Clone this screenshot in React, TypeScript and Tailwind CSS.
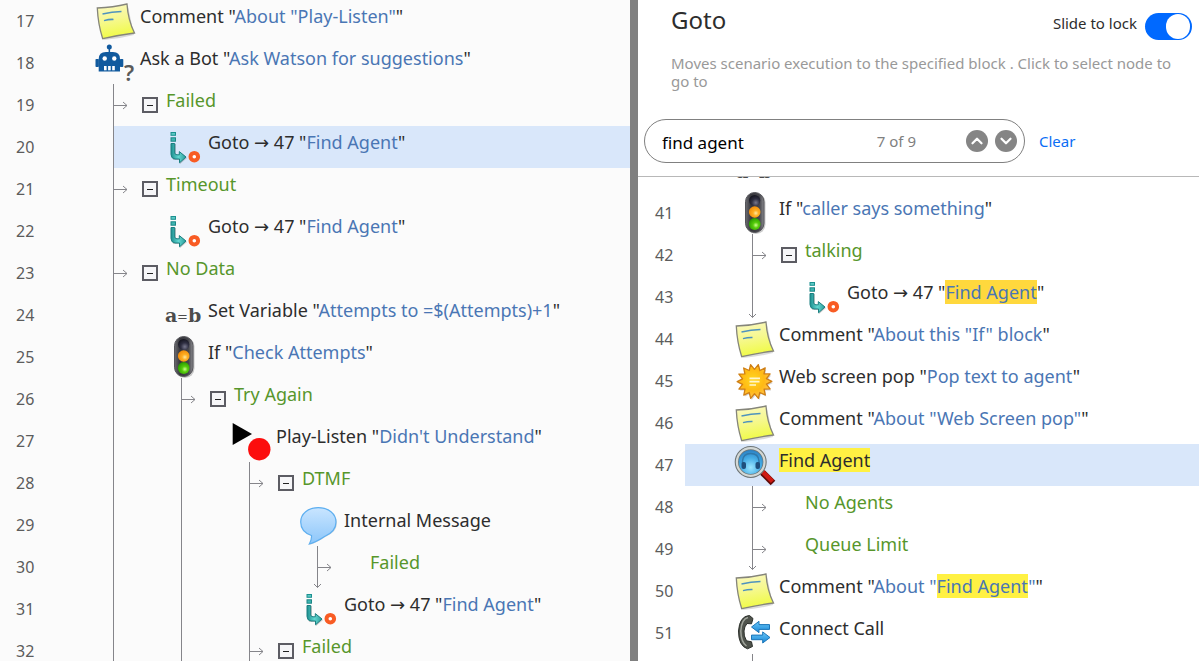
import { useState } from "react";
import type { ReactNode } from "react";
import { ChevronDown, ChevronUp } from "lucide-react";
import clsx from "clsx";

type IconName = "note" | "bot" | "goto" | "variable" | "if" | "play" | "message" | "pop" | "find" | "call";

type Row = {
  n: number;
  // vertical guide lines left of the row, "end" closes the line with an arrow head
  guides: ("line" | "end")[];
  icon?: IconName;
  branch?: boolean;
  collapsible?: boolean;
  selected?: boolean;
  label: ReactNode;
};

const Name = ({ children }: { children: ReactNode }) => (
  <>
    &quot;<span className="text-[#4a76b4]">{children}</span>&quot;
  </>
);

const GotoLabel = ({ children = "Find Agent" }: { children?: ReactNode }) => (
  <>
    Goto <span className="font-['DejaVu_Sans',sans-serif] leading-none">→</span> 47 <Name>{children}</Name>
  </>
);

const scenario: Row[] = [
  { n: 17, guides: [], icon: "note", label: <>Comment <Name>About "Play-Listen"</Name></> },
  { n: 18, guides: [], icon: "bot", label: <>Ask a Bot <Name>Ask Watson for suggestions</Name></> },
  { n: 19, guides: ["line"], branch: true, collapsible: true, label: "Failed" },
  { n: 20, guides: ["line"], icon: "goto", selected: true, label: <GotoLabel /> },
  { n: 21, guides: ["line"], branch: true, collapsible: true, label: "Timeout" },
  { n: 22, guides: ["line"], icon: "goto", label: <GotoLabel /> },
  { n: 23, guides: ["line"], branch: true, collapsible: true, label: "No Data" },
  { n: 24, guides: ["line"], icon: "variable", label: <>Set Variable <Name>Attempts to =$(Attempts)+1</Name></> },
  { n: 25, guides: ["line"], icon: "if", label: <>If <Name>Check Attempts</Name></> },
  { n: 26, guides: ["line", "line"], branch: true, collapsible: true, label: "Try Again" },
  { n: 27, guides: ["line", "line"], icon: "play", label: <>Play-Listen <Name>Didn't Understand</Name></> },
  { n: 28, guides: ["line", "line", "line"], branch: true, collapsible: true, label: "DTMF" },
  { n: 29, guides: ["line", "line", "line"], icon: "message", label: "Internal Message" },
  { n: 30, guides: ["line", "line", "line", "end"], branch: true, label: "Failed" },
  { n: 31, guides: ["line", "line", "line"], icon: "goto", label: <GotoLabel /> },
  { n: 32, guides: ["line", "line", "line"], branch: true, collapsible: true, label: "Failed" },
];

const results: Row[] = [
  { n: 40, guides: [], icon: "variable", label: "" },
  { n: 41, guides: [], icon: "if", label: <>If <Name>caller says something</Name></> },
  { n: 42, guides: ["line"], branch: true, collapsible: true, label: "talking" },
  {
    n: 43,
    guides: ["end"],
    icon: "goto",
    label: <GotoLabel><mark className="bg-[#ffd83d] text-inherit">Find Agent</mark></GotoLabel>,
  },
  { n: 44, guides: [], icon: "note", label: <>Comment <Name>About this "If" block</Name></> },
  { n: 45, guides: [], icon: "pop", label: <>Web screen pop <Name>Pop text to agent</Name></> },
  { n: 46, guides: [], icon: "note", label: <>Comment <Name>About "Web Screen pop"</Name></> },
  {
    n: 47,
    guides: [],
    icon: "find",
    selected: true,
    label: <mark className="bg-[#fff143] text-inherit">Find Agent</mark>,
  },
  { n: 48, guides: ["line"], branch: true, label: "No Agents" },
  { n: 49, guides: ["end"], branch: true, label: "Queue Limit" },
  {
    n: 50,
    guides: [],
    icon: "note",
    label: <>Comment <Name>About "<mark className="bg-[#fff143] text-inherit">Find Agent</mark>"</Name></>,
  },
  { n: 51, guides: [], icon: "call", label: "Connect Call" },
  { n: 52, guides: ["line"], branch: true, label: "" },
];

const SUN_POINTS = Array.from({ length: 28 }, (_, i) => {
  const r = i % 2 === 0 ? 17.3 : 12.2;
  const a = (i / 28) * Math.PI * 2 - 1.35;
  return `${(20.5 + r * Math.cos(a)).toFixed(1)},${(21.5 + r * Math.sin(a)).toFixed(1)}`;
}).join(" ");

function IconDefs() {
  return (
    <svg width="0" height="0" className="absolute" aria-hidden="true">
      <defs>
        <linearGradient id="paper" x1="0" y1="0" x2="0.2" y2="1">
          <stop offset="0" stopColor="#fbf9c4" />
          <stop offset="0.5" stopColor="#f6f891" />
          <stop offset="1" stopColor="#f0fb48" />
        </linearGradient>
        <linearGradient id="teal" x1="0" y1="0" x2="1" y2="0">
          <stop offset="0" stopColor="#1c8f8f" />
          <stop offset="0.5" stopColor="#62d6d0" />
          <stop offset="1" stopColor="#2a9c9a" />
        </linearGradient>
        <linearGradient id="housing" x1="0" y1="0" x2="1" y2="0">
          <stop offset="0" stopColor="#6d6d72" />
          <stop offset="0.3" stopColor="#36363c" />
          <stop offset="0.75" stopColor="#45454b" />
          <stop offset="1" stopColor="#8b8b8f" />
        </linearGradient>
        <radialGradient id="lampOff" cx="0.6" cy="0.7" r="0.7">
          <stop offset="0" stopColor="#77778c" />
          <stop offset="0.5" stopColor="#2f2f42" />
          <stop offset="1" stopColor="#15151f" />
        </radialGradient>
        <radialGradient id="lampAmber" cx="0.6" cy="0.6" r="0.6">
          <stop offset="0" stopColor="#ffe9a0" />
          <stop offset="0.4" stopColor="#ffae22" />
          <stop offset="1" stopColor="#f08c0a" />
        </radialGradient>
        <radialGradient id="lampGreen" cx="0.6" cy="0.6" r="0.6">
          <stop offset="0" stopColor="#d0ff90" />
          <stop offset="0.4" stopColor="#56cc0c" />
          <stop offset="1" stopColor="#2c9d00" />
        </radialGradient>
        <linearGradient id="bubble" x1="0" y1="0" x2="0" y2="1">
          <stop offset="0" stopColor="#c9e5ff" />
          <stop offset="1" stopColor="#8cc6fa" />
        </linearGradient>
        <radialGradient id="sun" cx="0.45" cy="0.45" r="0.55">
          <stop offset="0" stopColor="#ffd820" />
          <stop offset="0.6" stopColor="#ffb914" />
          <stop offset="1" stopColor="#ffc24a" />
        </radialGradient>
        <radialGradient id="lens" cx="0.5" cy="0.7" r="0.7">
          <stop offset="0" stopColor="#9ce6ff" />
          <stop offset="0.5" stopColor="#45ade6" />
          <stop offset="1" stopColor="#2474ba" />
        </radialGradient>
        <linearGradient id="arrowBlue" x1="0" y1="0" x2="0" y2="1">
          <stop offset="0" stopColor="#6cc8f8" />
          <stop offset="1" stopColor="#1786d6" />
        </linearGradient>
      </defs>
    </svg>
  );
}

const icons: Record<IconName, ReactNode> = {
  note: (
    <>
      <path d="M3 10 L8.5 40 Q24 39 39 35 L33 6 Z" fill="#000" opacity="0.14" />
      <path d="M2.3 8 Q18 7.500 32 4 Q33 20 39.500 33 Q24 35 7.700 38.700 Q3 24 2.300 8 Z" fill="url(#paper)" stroke="#85857a" strokeWidth="1.3" />
      <path d="M7.500 14 Q17 12 26.500 11.600" fill="none" stroke="#4f93bd" strokeWidth="1.500" />
      <path d="M9 20.600 Q14 19.200 18.500 19.400" fill="none" stroke="#4f93bd" strokeWidth="1.500" />
    </>
  ),
  bot: (
    <>
      <g fill="#115a9e">
        <circle cx="14.300" cy="5" r="2.500" />
        <rect x="13.600" y="6" width="1.500" height="5" />
        <path d="M3.700 29.500 V17 Q3.700 10 11 10 H18 Q25 10 25 17 V29.500 Z" />
        <rect x="0.500" y="17" width="3.400" height="8" rx="0.800" />
        <rect x="24.900" y="17" width="3.400" height="8" rx="0.800" />
      </g>
      <g fill="#fff">
        <circle cx="9.700" cy="16.500" r="2.200" />
        <circle cx="19.300" cy="16.500" r="2.200" />
        <rect x="9" y="24" width="2.600" height="4.300" />
        <rect x="13.100" y="24" width="2.600" height="4.300" />
        <rect x="17.200" y="24" width="2.600" height="4.300" />
      </g>
      <text x="29" y="39" fontSize="22" fontWeight="600" fill="#5a5a5a" fontFamily="Noto Sans, sans-serif">?</text>
    </>
  ),
  goto: (
    <>
      <path d="M9 18 h4 v11 h4 v-3 l7 6 l-7 6 v-4 h-7 Z" fill="#000" opacity="0.2" />
      <rect x="8" y="6.500" width="4.500" height="2.800" fill="#5cc9c4" stroke="#1c9090" />
      <rect x="8" y="11.800" width="4.500" height="3.400" fill="#3eb5b1" stroke="#1c8585" />
      <path
        d="M8 17.500 H11.700 V27 Q12 28.700 14 28.800 H16.300 V25.600 L23 31 L16.500 36.800 V33 H12 Q8 32.500 8 28.500 Z"
        fill="url(#teal)"
        stroke="#1b7f80"
        strokeWidth="1"
      />
      <circle cx="31.300" cy="30.700" r="3.800" fill="#fff" stroke="#f85c24" strokeWidth="4" />
    </>
  ),
  variable: (
    <g fill="#4c4c4c" fontFamily="DejaVu Serif, serif" fontWeight="700">
      <text x="2" y="28" fontSize="19">a</text>
      <text x="14" y="27" fontSize="13" fontWeight="400">=</text>
      <text x="25" y="28" fontSize="19">b</text>
    </g>
  ),
  if: (
    <>
      <rect x="12" y="1" width="19.500" height="41" rx="9.500" fill="#000" opacity="0.2" />
      <rect x="11.500" y="0.500" width="18.500" height="40" rx="9.200" fill="url(#housing)" stroke="#55555a" />
      <circle cx="20.700" cy="8.500" r="5.600" fill="url(#lampOff)" />
      <circle cx="20.700" cy="20" r="5.800" fill="url(#lampAmber)" />
      <circle cx="20.700" cy="32" r="5.900" fill="url(#lampGreen)" />
    </>
  ),
  play: (
    <>
      <path d="M1.700 3 L21 14 L1.700 25 Z" fill="#000" />
      <circle cx="28.300" cy="29.200" r="11.200" fill="#fc0d0d" />
    </>
  ),
  message: (
    <>
      <path d="M20 5 C30 5 38 11 38 19 C38 27 31 31 26 33 C22 36 15 40 10 41 C12 38 13 35 12.500 32 C6 30 2 25 2 19 C2 11 9 5 20 5 Z" fill="#000" opacity="0.13" />
      <path
        d="M19.300 3.600 C29.500 3.600 37 9.800 37 18 C37 26 31 30 26 32.300 C21 35.600 15 38.800 10.300 40 C12 37 12.800 34.500 12.500 31.500 C6 29.300 1.700 24.500 1.700 18 C1.700 9.800 9 3.600 19.300 3.600 Z"
        fill="url(#bubble)"
        stroke="#5eaff0"
        strokeWidth="1.200"
      />
    </>
  ),
  pop: (
    <>
      <polygon points={SUN_POINTS} fill="#000" opacity="0.18" transform="translate(1 1.500)" />
      <polygon points={SUN_POINTS} fill="url(#sun)" stroke="#cf7f14" strokeWidth="1.300" strokeLinejoin="round" />
      <path d="M15.500 18.300 H26 M15.500 21.700 H25.500 M15.500 25 H22" stroke="#fff6cf" strokeWidth="1.700" />
    </>
  ),
  find: (
    <>
      <path d="M28.500 28.500 L39 39" stroke="#5e0a08" strokeWidth="6.500" />
      <path d="M28.500 27.500 L38.500 37.500" stroke="#cf1a14" strokeWidth="4.500" />
      <circle cx="16.700" cy="18" r="14" fill="url(#lens)" stroke="#6f7676" strokeWidth="4" />
      <circle cx="16.700" cy="18" r="13.800" fill="none" stroke="#d3d8d6" strokeWidth="2.200" />
      <path d="M8.500 20 V17 Q9 9.500 16.700 9.500 Q24.500 9.500 25 17 V20" fill="none" stroke="#2f78ab" strokeWidth="1.500" />
      <rect x="7.500" y="18" width="4.500" height="7" rx="2" fill="#1f4f7c" />
      <rect x="21.500" y="18" width="4.500" height="7" rx="2" fill="#1f4f7c" />
    </>
  ),
  call: (
    <>
      <path
        d="M15.500 3.500 Q5.500 4 4.500 19 Q4.500 34 13.500 36.800 L18.500 34.500 L17.500 29.800 L12.500 28.800 Q9.500 24 10 19 Q10.300 14.500 13 11.500 L17.500 11.800 L19 6.500 Z"
        fill="#4f534c"
        stroke="#2c302b"
      />
      <path d="M14 5.500 Q7.500 7 6.800 19 Q7 30 12.500 34" fill="none" stroke="#a0a49b" strokeWidth="1.500" />
      <path d="M17.500 15 L25 9.300 V12.600 H35.500 V17.400 H25 V20.700 Z" fill="url(#arrowBlue)" stroke="#1c76b8" />
      <path d="M36 25.500 L28.700 19.900 V23.100 H17.500 V27.700 H28.700 V31 Z" fill="url(#arrowBlue)" stroke="#1c76b8" />
    </>
  ),
};

function TreeRow({ row }: { row: Row }) {
  const [open, setOpen] = useState(true);

  return (
    <li className="flex h-[42px] whitespace-nowrap">
      <span className="flex w-[46px] shrink-0 items-center pl-4 text-base text-[#5c5c5c]">{row.n}</span>
      {row.guides.map((guide, i) => (
        <span
          key={i}
          className={clsx(
            "flex w-[68px] shrink-0 items-end justify-end",
            guide === "line" && "border-r border-[#85858a]",
          )}
        >
          {guide === "end" && (
            <svg width="9" height="42" viewBox="0 0 9 42" className="-mr-1" fill="none" stroke="#85858a">
              <path d="M4.500 0 V41.500 M1 38 L4.500 41.500 L8 38" />
            </svg>
          )}
        </span>
      ))}
      {row.branch ? (
        <div className="flex min-w-0 flex-1 items-center">
          <svg width="14" height="9" viewBox="0 0 14 9" className="shrink-0" fill="none" stroke="#85858a">
            <path d="M0 4.500 H13 M9 1 L13 4.500 L9 8" />
          </svg>
          <span className="flex w-[38px] shrink-0 pl-[14px]">
            {row.collapsible && (
              <button
                type="button"
                aria-label={open ? "Collapse" : "Expand"}
                onClick={() => setOpen(!open)}
                className="flex size-4 items-center justify-center border-2 border-[#5c5c63] bg-[#f6f6f8]"
              >
                <span className="h-px w-[6px] bg-[#222]" />
              </button>
            )}
          </span>
          <span className="pb-[10px] text-lg leading-6 text-[#57962b]">{row.label}</span>
        </div>
      ) : (
        <div className={clsx("flex min-w-0 flex-1 items-center pl-[49px]", row.selected && "bg-[#d9e7fa]")}>
          <svg width="42" height="42" viewBox="0 0 42 42" className="mr-[3px] shrink-0 overflow-visible" aria-hidden="true">
            {row.icon && icons[row.icon]}
          </svg>
          <span className="pb-[10px] text-lg leading-6">{row.label}</span>
        </div>
      )}
    </li>
  );
}

export default function App() {
  const [query, setQuery] = useState("find agent");
  const [locked, setLocked] = useState(true);

  return (
    <div className="grid h-screen grid-cols-[630fr_8px_561fr] overflow-hidden font-['Noto_Sans',sans-serif] text-[#2d2d2d]">
      <IconDefs />
      <main className="min-w-0 overflow-hidden bg-[#fbfbfb]">
        <ul>
          {scenario.map((row) => (
            <TreeRow key={row.n} row={row} />
          ))}
        </ul>
      </main>
      <div className="bg-[#808080]" />
      <aside className="flex min-h-0 min-w-0 flex-col bg-white">
        <header className="border-b border-[#b8b8b8] pb-[13px] text-[15px]">
          <div className="flex items-start justify-between pt-1 pr-[7px] pl-[33px]">
            <h1 className="text-2xl leading-8">Goto</h1>
            <label className="flex items-start gap-2 pt-[7px] leading-6">
              Slide to lock
              <input
                type="checkbox"
                role="switch"
                checked={locked}
                onChange={(e) => setLocked(e.target.checked)}
                className="mt-[2px] h-[27px] w-[47px] appearance-none rounded-full bg-gray-300 p-px before:block before:size-[25px] before:rounded-full before:bg-white checked:bg-[#0069ff] checked:before:ml-5 checked:before:w-[24px]"
              />
            </label>
          </div>
          <p className="mt-[14px] pr-3 pl-[33px] leading-[18px] text-[#999]">
            Moves scenario execution to the specified block . Click to select node to go to
          </p>
          <div className="mt-[29px] flex items-center pl-[6px]">
            <div className="flex h-11 w-[381px] items-center rounded-full border border-[#808080] pr-[7px] pl-[17px]">
              <input
                type="text"
                aria-label="Search blocks"
                value={query}
                onChange={(e) => setQuery(e.target.value)}
                className="min-w-0 flex-1 pt-1 text-[17px] text-black outline-none"
              />
              <span className="mr-[50px] text-[#808080]">7 of 9</span>
              <div className="flex gap-[7px]">
                <button type="button" aria-label="Previous match" className="flex size-[22px] items-center justify-center rounded-full bg-[#858585] text-white">
                  <ChevronUp size={18} strokeWidth={3} />
                </button>
                <button type="button" aria-label="Next match" className="flex size-[22px] items-center justify-center rounded-full bg-[#858585] text-white">
                  <ChevronDown size={18} strokeWidth={3} />
                </button>
              </div>
            </div>
            <button type="button" onClick={() => setQuery("")} className="ml-[14px] text-[#0b6ef5]">
              Clear
            </button>
          </div>
        </header>
        <div className="min-h-0 flex-1 overflow-hidden pl-px">
          <ul className="-mt-[27px]">
            {results.map((row) => (
              <TreeRow key={row.n} row={row} />
            ))}
          </ul>
        </div>
      </aside>
    </div>
  );
}
